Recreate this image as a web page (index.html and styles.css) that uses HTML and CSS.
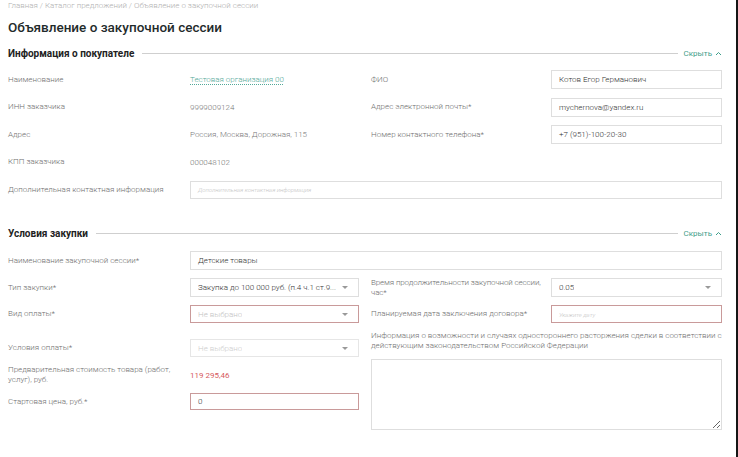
FILE: index.html
```html
<!DOCTYPE html>
<html lang="ru">
<head>
<meta charset="utf-8">
<title>Объявление о закупочной сессии</title>
<link rel="stylesheet" href="styles.css">
</head>
<body>
<div class="frame">
  <div class="page">
    <div class="crumbs">Главная / Каталог предложений / Объявление о закупочной сессии</div>
    <h1 class="title">Объявление о закупочной сессии</h1>

    <section class="sec">
      <div class="sec-head">
        <h2>Информация о покупателе</h2>
        <span class="rule"></span>
        <a class="toggle">Скрыть <svg width="7" height="5" viewBox="0 0 7 5"><path d="M1 4 L3.5 1.5 L6 4" fill="none" stroke="currentColor" stroke-width="1"/></svg></a>
      </div>
      <div class="buyer">
        <div class="lbl">Наименование</div>
        <div class="val"><a class="link">Тестовая организация 00</a></div>
        <div class="lbl rl">ФИО</div>
        <div class="inp">Котов Егор Германович</div>

        <div class="lbl">ИНН заказчика</div>
        <div class="val">9999009124</div>
        <div class="lbl rl">Адрес электронной почты*</div>
        <div class="inp">mychernova@yandex.ru</div>

        <div class="lbl">Адрес</div>
        <div class="val">Россия, Москва, Дорожная, 115</div>
        <div class="lbl rl">Номер контактного телефона*</div>
        <div class="inp">+7 (951)-100-20-30</div>

        <div class="lbl">КПП заказчика</div>
        <div class="val">000048102</div>
        <div></div>
        <div></div>

        <div class="lbl">Дополнительная контактная информация</div>
        <div class="inp wide"><span class="tiny">Дополнительная контактная информация</span></div>
      </div>
    </section>

    <section class="sec sec2">
      <div class="sec-head">
        <h2>Условия закупки</h2>
        <span class="rule"></span>
        <a class="toggle">Скрыть <svg width="7" height="5" viewBox="0 0 7 5"><path d="M1 4 L3.5 1.5 L6 4" fill="none" stroke="currentColor" stroke-width="1"/></svg></a>
      </div>
      <div class="full-row">
        <div class="lbl">Наименование закупочной сессии*</div>
        <div class="inp name">Детские товары</div>
      </div>
      <div class="cols">
        <div class="col left">
          <div class="lbl">Тип закупки*</div>
          <div class="inp sel"><span>Закупка до 100 000 руб. (п.4 ч.1 ст.9...</span><i class="caret"></i></div>

          <div class="lbl top">Вид оплаты*</div>
          <div class="inp sel error top"><span class="ph">Не выбрано</span><i class="caret"></i></div>

          <div class="lbl">Условия оплаты*</div>
          <div class="inp sel disabled"><span>Не выбрано</span><i class="caret"></i></div>

          <div class="lbl two">Предварительная стоимость товара (работ, услуг), руб.</div>
          <div class="val price">119 295,46</div>

          <div class="lbl">Стартовая цена, руб.*</div>
          <div class="inp error start">0</div>
        </div>
        <div class="col right">
          <div class="lbl two tight">Время продолжительности закупочной сессии, час*</div>
          <div class="inp sel"><span>0.05</span><i class="caret"></i></div>

          <div class="lbl">Планируемая дата заключения договора*</div>
          <div class="inp error h18"><span class="tiny">Укажите дату</span></div>

          <div class="lbl info">Информация о возможности и случаях одностороннего расторжения сделки в соответствии с действующим законодательством Российской Федерации</div>
          <textarea class="area"></textarea>
        </div>
      </div>
    </section>
  </div>
</div>
</body>
</html>
```

FILE: styles.css
```css
* { box-sizing: border-box; }
html, body { margin: 0; padding: 0; background: #fff; }
body {
  font-family: Roboto, "Noto Sans", "Liberation Sans", sans-serif;
  color: #666;
  font-size: 8px;
  font-weight: 300;
}
.frame {
  width: 738px;
  min-height: 457px;
  border-right: 2px solid #151515;
}
.page {
  padding: 0 14px 0 8px;
  width: 736px;
}
.crumbs {
  font-size: 8px;
  line-height: 11px;
  color: #b0b0b0;
  font-weight: 300;
}
.title {
  margin: 7px 0 0;
  font-size: 13.5px;
  line-height: 18px;
  font-weight: 500;
  color: #1f2b2b;
}
.sec { margin-top: 10px; }
.sec2 { margin-top: 27px; }
.sec-head {
  display: flex;
  align-items: center;
  height: 14px;
  gap: 8px;
}
.sec-head h2 {
  margin: 0;
  font-size: 10px;
  font-weight: 700;
  color: #222;
  white-space: nowrap;
}
.rule { flex: 1; height: 1px; background: #cfcfcf; }
.toggle {
  color: #3f9e8a;
  font-size: 8px;
  font-weight: 400;
  display: flex;
  align-items: center;
  gap: 3px;
  margin-left: -2px;
}
.buyer {
  margin-top: 10px;
  display: grid;
  grid-template-columns: 182px 169px 192px 171px;
  grid-auto-rows: 19px;
  row-gap: 8.5px;
  align-items: center;
}
.lbl { color: #6e6e6e; line-height: 10px; }
.rl { padding-left: 12px; }
.val { color: #777; }
.link {
  color: #52a898;
  text-decoration: underline dotted #52a898;
  text-underline-offset: 2px;
}
.inp {
  height: 19px;
  border: 1px solid #dedede;
  display: flex;
  align-items: center;
  padding: 0 7px;
  color: #333;
  background: #fff;
  white-space: nowrap;
  overflow: hidden;
}
.wide { grid-column: 2 / 5; height: 18px; }
.tiny { font-size: 6px; color: #c4c4c4; font-style: italic; }
.full-row {
  margin-top: 11px;
  display: grid;
  grid-template-columns: 182px 1fr;
  align-items: center;
}
.cols {
  margin-top: 8px;
  display: grid;
  grid-template-columns: 351px 351px;
  column-gap: 12px;
  align-items: start;
}
.col {
  display: grid;
  align-items: center;
  row-gap: 8px;
}
.left { grid-template-columns: 182px 169px; grid-template-rows: 19px 26px 18px 20px 17px; }
.left .top { align-self: start; }
.left .lbl.top { padding-top: 4px; }
.right { grid-template-columns: 180px 171px; grid-template-rows: 19px 18px 20px 71px; }
.left .sel.top, .disabled, .h18 { height: 18px; }
.start { height: 17px; }
.sel { justify-content: space-between; }
.sel span { overflow: hidden; text-overflow: ellipsis; }
.caret {
  width: 0; height: 0;
  border-left: 3px solid transparent;
  border-right: 3px solid transparent;
  border-top: 3px solid #999;
  flex: none;
  margin-right: 3px;
}
.error { border-color: #c99a9a; }
.ph { color: #c2c2c2; }
.disabled { border-color: #e6e6e6; color: #cdcdcd; }
.two { padding-right: 8px; }
.two.tight { padding-right: 0; letter-spacing: -0.12px; }
.price { color: #d65a5e; font-weight: 400; }
.info { grid-column: 1 / 3; }
.area {
  grid-column: 1 / 3;
  height: 71px;
  border: 1px solid #dedede;
  resize: vertical;
  margin: 0;
  margin-top: -1px;
  font: inherit;
}
```
